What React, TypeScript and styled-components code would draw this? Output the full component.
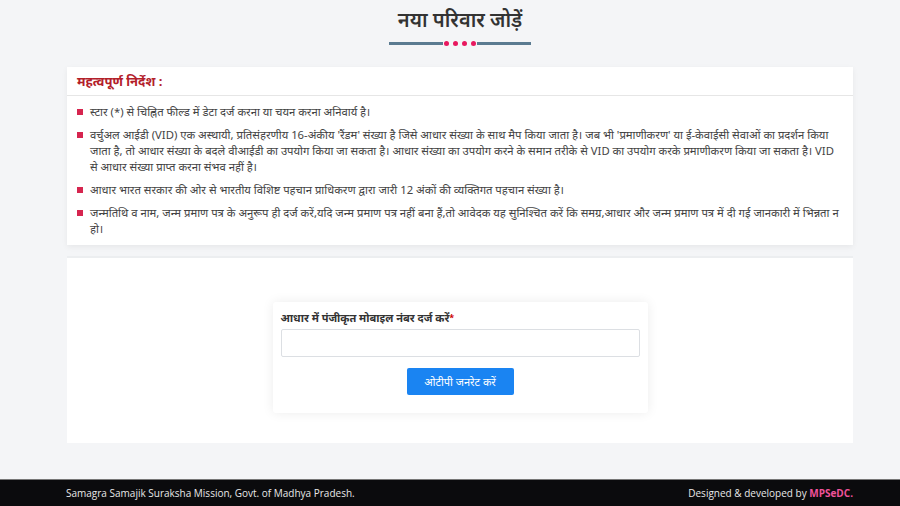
import React from 'react'
import styled, { createGlobalStyle } from 'styled-components'

const GlobalStyle = createGlobalStyle`
  html, body {
    margin: 0;
    padding: 0;
    background: #f4f5f7;
    font-family: 'Noto Sans', 'Open Sans', sans-serif;
  }
  * {
    box-sizing: border-box;
  }
`

const instructions = [
  'स्टार (*) से चिह्नित फील्ड में डेटा दर्ज करना या चयन करना अनिवार्य है।',
  "वर्चुअल आईडी (VID) एक अस्थायी, प्रतिसंहरणीय 16-अंकीय 'रैंडम' संख्या है जिसे आधार संख्या के साथ मैप किया जाता है। जब भी 'प्रमाणीकरण' या ई-केवाईसी सेवाओं का प्रदर्शन किया जाता है, तो आधार संख्या के बदले वीआईडी का उपयोग किया जा सकता है। आधार संख्या का उपयोग करने के समान तरीके से VID का उपयोग करके प्रमाणीकरण किया जा सकता है। VID से आधार संख्या प्राप्त करना संभव नहीं है।",
  'आधार भारत सरकार की ओर से भारतीय विशिष्ट पहचान प्राधिकरण द्वारा जारी 12 अंकों की व्यक्तिगत पहचान संख्या है।',
  'जन्मतिथि व नाम, जन्म प्रमाण पत्र के अनुरूप ही दर्ज करें,यदि जन्म प्रमाण पत्र नहीं बना हैं,तो आवेदक यह सुनिश्चित करें कि समग्र,आधार और जन्म प्रमाण पत्र में दी गई जानकारी में भिन्नता न हो।'
]

export default function App() {
  return (
    <>
      <GlobalStyle />
      <Page>
        <Main>
          <TitleBlock>
            <Title>नया परिवार जोड़ें</Title>
            <Divider>
              <Line />
              <Dots>
                <Dot />
                <Dot />
                <Dot />
                <Dot />
              </Dots>
              <Line />
            </Divider>
          </TitleBlock>

          <InstructionCard>
            <InstructionHeader>महत्वपूर्ण निर्देश :</InstructionHeader>
            <InstructionList>
              {instructions.map(item => (
                <InstructionItem key={item}>{item}</InstructionItem>
              ))}
            </InstructionList>
          </InstructionCard>

          <FormSection>
            <FormCard>
              <Label>
                आधार में पंजीकृत मोबाइल नंबर दर्ज करें<Star>*</Star>
              </Label>
              <Input type='text' />
              <ButtonRow>
                <PrimaryButton>ओटीपी जनरेट करें</PrimaryButton>
              </ButtonRow>
            </FormCard>
          </FormSection>
        </Main>

        <Footer>
          <FooterText>Samagra Samajik Suraksha Mission, Govt. of Madhya Pradesh.</FooterText>
          <FooterText>
            Designed &amp; developed by <Brand>MPSeDC.</Brand>
          </FooterText>
        </Footer>
      </Page>
    </>
  )
}

const Page = styled.div`
  min-height: 506px;
  display: flex;
  flex-direction: column;
`

const Main = styled.main`
  flex: 1;
  width: 786px;
  margin-left: 67px;
  padding-bottom: 36px;
`

const TitleBlock = styled.div`
  display: flex;
  flex-direction: column;
  align-items: center;
  padding-top: 6px;
  height: 67px;
`

const Title = styled.h2`
  margin: 0;
  font-size: 20px;
  font-weight: 600;
  color: #333;
  line-height: 28px;
`

const Divider = styled.div`
  display: flex;
  align-items: center;
  width: 142px;
  margin-top: 7px;
`

const Line = styled.div`
  flex: 1;
  height: 3px;
  background: #5b7b91;
`

const Dots = styled.div`
  display: flex;
  gap: 4px;
  padding: 0 1px;
`

const Dot = styled.span`
  width: 5px;
  height: 5px;
  border-radius: 50%;
  background: #e8185f;
`

const InstructionCard = styled.section`
  background: #fff;
  box-shadow: 0 2px 6px rgba(0, 0, 0, 0.06);
  padding-bottom: 1px;
`

const InstructionHeader = styled.h4`
  margin: 0;
  padding: 6px 10px 5px;
  font-size: 13px;
  font-weight: 700;
  color: #b3202a;
  border-bottom: 1px solid #e6e6e6;
  line-height: 17px;
`

const InstructionList = styled.ul`
  list-style: none;
  margin: 0;
  padding: 8px 10px 0 10px;
`

const InstructionItem = styled.li`
  position: relative;
  padding-left: 13px;
  font-size: 11.3px;
  line-height: 16px;
  color: #444;
  margin-bottom: 7px;

  &::before {
    content: '';
    position: absolute;
    left: 0;
    top: 5px;
    width: 6px;
    height: 6px;
    background: #d6254f;
  }
`

const FormSection = styled.section`
  margin-top: 13px;
  background: #fff;
  box-shadow: 0 -2px 0 #eceef0;
  height: 185px;
  display: flex;
  justify-content: center;
  padding-top: 44px;
`

const FormCard = styled.div`
  width: 375px;
  height: 111px;
  background: #fff;
  box-shadow: 0 0 12px rgba(0, 0, 0, 0.08);
  border-radius: 3px;
  padding: 8px 8px 0;
`

const Label = styled.label`
  display: block;
  font-size: 11px;
  font-weight: 700;
  color: #333;
  line-height: 16px;
`

const Star = styled.span`
  color: #c00;
  font-size: 9px;
  vertical-align: top;
`

const Input = styled.input`
  display: block;
  width: 100%;
  height: 28px;
  margin-top: 3px;
  border: 1px solid #dcdfe3;
  border-radius: 2px;
  background: #fff;
`

const ButtonRow = styled.div`
  display: flex;
  justify-content: center;
  margin-top: 11px;
`

const PrimaryButton = styled.button`
  width: 107px;
  height: 27px;
  border: none;
  border-radius: 2px;
  background: #1a84f2;
  color: #fff;
  font-family: 'Noto Sans', sans-serif;
  font-size: 11px;
`

const Footer = styled.footer`
  height: 27px;
  background: #0b0b0d;
  border-top: 1px solid #777;
  display: flex;
  align-items: center;
  justify-content: space-between;
  padding: 0 47px 0 66px;
`

const FooterText = styled.span`
  font-family: 'Open Sans', sans-serif;
  font-size: 10px;
  color: #e8e8e8;
`

const Brand = styled.b`
  color: #f0529a;
  font-weight: 700;
`
